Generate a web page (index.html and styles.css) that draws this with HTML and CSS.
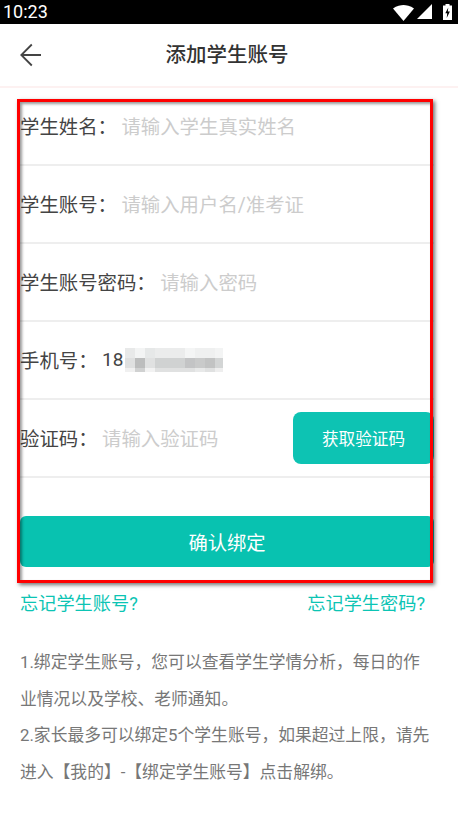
FILE: index.html
```html
<!DOCTYPE html>
<html lang="zh-CN">
<head>
<meta charset="utf-8">
<title>添加学生账号</title>
<link rel="stylesheet" href="styles.css">
</head>
<body>
<div class="status">
  <span class="time">10:23</span>
  <span class="status-icons">
    <svg class="wifi" width="21" height="16" viewBox="0 0 21 16"><path d="M0 3.500C3.500.8 8 0 10.500 0S17.500.8 21 3.500L10.500 16z" fill="#fff"/></svg>
    <svg class="signal" width="15" height="15" viewBox="0 0 15 15"><path d="M15 0V15H0z" fill="#fff"/></svg>
    <svg width="9" height="16" viewBox="0 0 9 16"><path d="M2.500 0H6.500V1.500H9V16H0V1.500H2.500z" fill="#fff"/><path d="M5.300 3.500L2.300 9.300H4.200L3.700 14L6.900 7.600H4.800z" fill="#000"/></svg>
  </span>
</div>
<header class="nav">
  <svg class="back" width="22" height="24" viewBox="0 0 22 24"><path d="M21 12H1.500M11.800 1.500L1.300 12l10.500 10.500" fill="none" stroke="#444" stroke-width="1.800"/></svg>
  <h1>添加学生账号</h1>
</header>
<main class="form">
  <div class="row"><span class="label">学生姓名：</span><span class="hint">请输入学生真实姓名</span></div>
  <div class="row"><span class="label">学生账号：</span><span class="hint">请输入用户名/准考证</span></div>
  <div class="row"><span class="label">学生账号密码：</span><span class="hint">请输入密码</span></div>
  <div class="row"><span class="label">手机号：</span><span class="phone">18</span>
    <svg class="mosaic" width="98" height="24" viewBox="0 0 98 24" shape-rendering="crispEdges">
      <rect width="98" height="24" fill="#fff"/>
      <rect x="0" width="10" height="10" fill="#e8e9e9"/><rect x="10" width="10" height="10" fill="#f3f4f4"/><rect x="20" width="10" height="10" fill="#e6e8e8"/><rect x="30" width="30" height="10" fill="#ebecec"/><rect x="60" width="10" height="10" fill="#f4f5f5"/><rect x="70" width="20" height="10" fill="#eff0f0"/><rect x="90" width="8" height="10" fill="#f3f4f4"/>
      <rect x="0" y="10" width="10" height="10" fill="#dfe0e0"/><rect x="10" y="10" width="10" height="10" fill="#bcbdbd"/><rect x="20" y="10" width="10" height="10" fill="#e0e1e1"/><rect x="30" y="10" width="30" height="10" fill="#d0d2d2"/><rect x="60" y="10" width="10" height="10" fill="#c3c4c5"/><rect x="70" y="10" width="10" height="10" fill="#c9caca"/><rect x="80" y="10" width="10" height="10" fill="#c2c3c3"/><rect x="90" y="10" width="8" height="10" fill="#d3d5d5"/>
      <rect x="0" y="20" width="10" height="4" fill="#f0f0f0"/><rect x="10" y="20" width="10" height="4" fill="#d0d1d1"/><rect x="20" y="20" width="10" height="4" fill="#f2f2f2"/><rect x="30" y="20" width="40" height="4" fill="#e0e1e1"/><rect x="70" y="20" width="10" height="4" fill="#e8e9e9"/><rect x="80" y="20" width="10" height="4" fill="#e0e1e1"/><rect x="90" y="20" width="8" height="4" fill="#eeeeee"/>
    </svg>
  </div>
  <div class="row"><span class="label">验证码：</span><span class="hint">请输入验证码</span><button class="code-btn">获取验证码</button></div>
  <button class="confirm">确认绑定</button>
  <div class="highlight"></div>
</main>
<div class="links"><span>忘记学生账号?</span><span>忘记学生密码?</span></div>
<section class="notes">
  <p>1.绑定学生账号，您可以查看学生学情分析，每日的作业情况以及学校、老师通知。</p>
  <p>2.家长最多可以绑定5个学生账号，如果超过上限，请先进入【我的】-【绑定学生账号】点击解绑。</p>
</section>
</body>
</html>
```
FILE: styles.css
```css
* { box-sizing: border-box; }
html, body { margin: 0; padding: 0; }
body {
  width: 458px;
  height: 820px;
  overflow: hidden;
  background: #fff;
  font-family: Roboto, "Noto Sans CJK SC", sans-serif;
  color: #444;
}
.status {
  height: 24px;
  background: #000;
  color: #fff;
  display: flex;
  justify-content: space-between;
  align-items: center;
  padding: 0 6px 0 3px;
}
.time { font: 18px/24px Roboto, sans-serif; }
.status-icons { display: flex; align-items: flex-start; }
.status-icons svg { display: block; }
.wifi { margin-top: 1px; margin-right: 3px; }
.signal { margin-right: 11px; }
.nav {
  height: 64px;
  border-bottom: 2px solid #fdf1f1;
  display: flex;
  align-items: center;
  justify-content: center;
  position: relative;
  padding-right: 4px;
}
.back { position: absolute; left: 20px; top: 19px; }
.nav h1 { margin: 0; font-size: 20.500px; font-weight: 500; color: #333; line-height: 24px; }
.form {
  position: relative;
  width: 434px;
  padding-left: 20px;
  height: 495px;
}
.row {
  height: 78px;
  border-bottom: 2px solid #eee;
  display: flex;
  align-items: center;
  font-size: 19.400px;
}
.label { color: #444; margin-right: 4.500px; margin-bottom: 1px; }
.hint { color: #ccc; margin-bottom: 1px; }
.phone {
  color: #444;
  font: 19px Roboto, sans-serif;
  width: 23px;
  margin-bottom: 1px;
}
.mosaic { display: block; }
.code-btn {
  margin-left: auto;
  width: 141px;
  height: 52px;
  border: 0;
  padding: 0;
  border-radius: 8px;
  background: #0dc3b3;
  color: #fff;
  font: 16.600px "Noto Sans CJK SC", sans-serif;
}
.confirm {
  display: block;
  width: 414px;
  height: 51px;
  margin-top: 38px;
  border: 0;
  border-radius: 6px;
  background: #08c2b0;
  color: #fff;
  font: 19.300px "Noto Sans CJK SC", sans-serif;
}
.highlight {
  position: absolute;
  left: 17px;
  top: 11px;
  width: 416px;
  height: 484px;
  border: 3px solid #f00;
  box-shadow: 2px 2px 4px rgba(0,0,0,.55), inset 2px 2px 3px rgba(0,0,0,.4);
}
.links {
  display: flex;
  justify-content: space-between;
  padding: 8px 33px 0 20px;
  font-size: 18.200px;
  line-height: 26px;
  color: #0cc4b4;
}
.notes {
  padding: 27px 24px 0 20px;
  font-size: 16.800px;
  line-height: 36.600px;
  color: #777;
}
.notes p { margin: 0; }
```
